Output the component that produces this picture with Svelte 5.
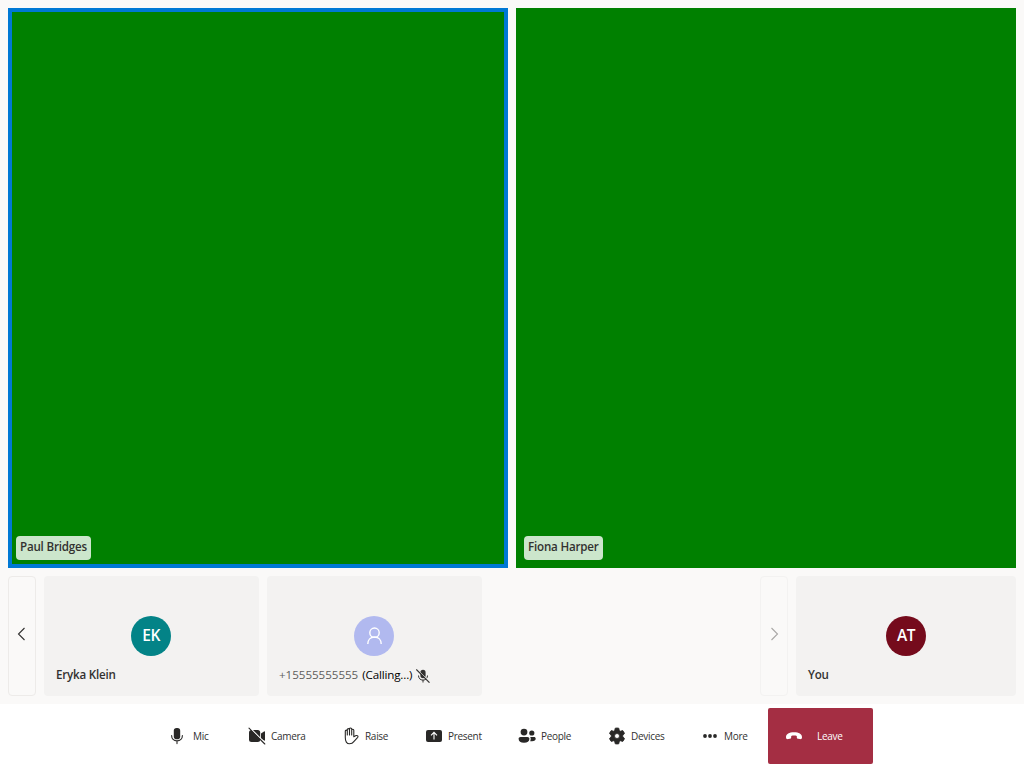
<script>
  const controls = [
    { id: 'mic', label: 'Mic', width: 80, gap: 6 },
    { id: 'camera', label: 'Camera', width: 94, gap: 4 },
    { id: 'raise', label: 'Raise', width: 83, gap: 4 },
    { id: 'present', label: 'Present', width: 93, gap: 4 },
    { id: 'people', label: 'People', width: 90, gap: 4 },
    { id: 'devices', label: 'Devices', width: 93, gap: 4 },
    { id: 'more', label: 'More', width: 84, gap: 4 },
    { id: 'leave', label: 'Leave', width: 105, gap: 13 }
  ];
</script>

<main>
  <section class="videos">
    <div class="video speaking"><span class="tag">Paul Bridges</span></div>
    <div class="video"><span class="tag">Fiona Harper</span></div>
  </section>

  <section class="strip">
    <button class="nav" aria-label="Previous">
      <svg width="12" height="14" viewBox="0 0 12 14"><path d="M9.5 1 3.5 7l6 6" /></svg>
    </button>
    <div class="tile">
      <div class="avatar teal">EK</div>
      <div class="name">Eryka Klein</div>
    </div>
    <div class="tile">
      <div class="avatar lilac">
        <svg width="20" height="20" viewBox="0 0 20 20"><circle cx="10.5" cy="6.7" r="4.7" /><path d="M3.8 18c0-4.3 2.7-7 6.7-7s6.7 2.7 6.7 7" /></svg>
      </div>
      <div class="name phone">
        <span class="number">+15555555555</span><span class="state">(Calling...)</span>
        <svg class="muted" width="14" height="14" viewBox="0 0 14 14">
          <rect x="4.4" y=".8" width="5.2" height="8.4" rx="2.6" fill="#323130" />
          <path d="M2.5 6.5c0 2.7 1.7 4.6 4.5 4.6s4.5-1.9 4.5-4.6M7 11v2.5" fill="none" stroke="#323130" />
          <path d="M1 0 14 13" stroke="#f3f2f1" stroke-width=".8" />
          <path d="M.3.5 13.5 13.7" stroke="#323130" stroke-width="1.1" />
        </svg>
      </div>
    </div>
    <div class="space"></div>
    <button class="nav disabled" aria-label="Next">
      <svg width="12" height="14" viewBox="0 0 12 14"><path d="m3.5 1 6 6-6 6" /></svg>
    </button>
    <div class="tile self">
      <div class="avatar maroon">AT</div>
      <div class="name">You</div>
    </div>
  </section>

  <nav class="bar">
    {#each controls as c}
      <button class="control {c.id}" style="width:{c.width}px;gap:{c.gap}px">
        <svg width="20" height="20" viewBox="0 0 20 20">
          {#if c.id === 'mic'}
            <rect x="6.8" y="1.9" width="6.4" height="11.3" rx="2.8" />
            <path class="line" d="M4.6 9.5c0 3.3 2.1 5.4 5.4 5.4s5.4-2.1 5.4-5.4M10 15v2.6" />
          {:else if c.id === 'camera'}
            <rect x="2" y="4" width="11.2" height="12" rx="2.5" />
            <path d="m14 7.6 3-2.2c.5-.4 1-.1 1 .5v8.2c0 .6-.5.9-1 .5l-3-2.2z" />
            <path d="M3 2 18.7 17.7" stroke="#fff" stroke-width="1.3" />
            <path class="line" d="M2 2.2 17.8 18" />
          {:else if c.id === 'raise'}
            <path class="line" d="M4.3 11.5V5.2c0-1.5 2-1.5 2 0V9 3.8c0-1.6 2.2-1.6 2.2 0V9 3.1c0-1.5 2.2-1.5 2.2 0V9 4.3c0-1.5 2.1-1.5 2.1 0v6.4l2.3-1.1c1.3-.5 2.5.6 1.6 1.7l-3.9 4.3c-.9 1.4-2 2.2-4.2 2.2-3 0-4.3-2.4-4.3-6.3z" />
          {:else if c.id === 'present'}
            <rect x="2" y="4" width="16" height="12" rx="2" />
            <path d="M10 13.5v-7M7 9.3l3-3 3 3" fill="none" stroke="#fff" stroke-width="1.1" />
          {:else if c.id === 'people'}
            <circle cx="7" cy="6.1" r="3.4" /><circle cx="14.8" cy="7" r="2.6" />
            <path d="M3.5 11h7c1.1 0 1.9.8 1.9 1.8 0 2.5-2 4-5.4 4s-5.4-1.5-5.4-4c0-1 .8-1.8 1.9-1.8z" />
            <path d="M13.2 11h3.8c1 0 1.7.7 1.7 1.6 0 2.1-1.8 3.2-5.5 2.6.6-1.5.8-3 0-4.2z" />
          {:else if c.id === 'devices'}
            <path fill-rule="evenodd" stroke="#292827" stroke-width=".8" stroke-linejoin="round" d="M8.2 2.2a8 8 0 0 1 3.6 0l.5 2.3 1.2.7 2.2-.7a8 8 0 0 1 1.8 3.1l-1.7 1.6v1.6l1.7 1.6a8 8 0 0 1-1.8 3.1l-2.2-.7-1.2.7-.5 2.3a8 8 0 0 1-3.6 0l-.5-2.3-1.2-.7-2.2.7a8 8 0 0 1-1.8-3.1l1.7-1.6V9.2L2.5 7.6a8 8 0 0 1 1.8-3.1l2.2.7 1.2-.7zM10 7.5a2.5 2.5 0 1 0 0 5 2.5 2.5 0 0 0 0-5z" />
          {:else if c.id === 'more'}
            <circle cx="5" cy="10" r="1.9" /><circle cx="10" cy="10" r="1.9" /><circle cx="15" cy="10" r="1.9" />
          {:else}
            <path d="M2 11.2C2 8 5.2 6.3 10 6.3s8 1.7 8 4.9c0 1.6-.8 2.2-2.2 1.9l-1.6-.3c-1-.2-1.4-.7-1.4-1.6V10c-1.8-.6-3.8-.6-5.6 0v1.2c0 .9-.4 1.4-1.4 1.6l-1.6.3C2.8 13.4 2 12.8 2 11.2z" />
          {/if}
        </svg>
        <span>{c.label}</span>
      </button>
    {/each}
  </nav>
</main>

<style>
  :global(body) { margin: 0; }
  main {
    width: 1024px; height: 768px; box-sizing: border-box; overflow: hidden;
    display: flex; flex-direction: column; background: #faf9f8; color: #323130;
    font-family: 'Open Sans', 'Noto Sans', sans-serif;
  }
  button { font: inherit; color: inherit; padding: 0; margin: 0; border: 0; background: none; }
  svg { display: block; flex: none; }
  .videos { display: grid; grid-template-columns: 1fr 1fr; gap: 8px; padding: 8px; height: 560px; }
  .video {
    box-sizing: border-box; background: #008000; padding: 8px;
    display: flex; align-items: flex-end;
  }
  .speaking { border: 4px solid #0078d4; padding: 4px; }
  .tag {
    box-sizing: border-box; height: 24px; line-height: 22px; padding: 0 4px; border-radius: 4px;
    background: rgba(255, 255, 255, .8); font-size: 11.6px; font-weight: 550; letter-spacing: -.2px;
  }
  .strip { display: flex; gap: 8px; height: 120px; padding: 0 8px 8px; }
  .nav {
    box-sizing: border-box; width: 28px; border: 1px solid #edebe9; border-radius: 4px;
    display: flex; align-items: center; justify-content: center; padding: 0 2px 4px 0;
  }
  .nav path { fill: none; stroke: #323130; stroke-width: 1.1; }
  .disabled { border-color: #f3f2f1; padding-right: 0; }
  .disabled path { stroke: #a9a7a5; }
  .tile {
    box-sizing: border-box; width: 215px; border-radius: 4px; background: #f3f2f1;
    padding: 40px 13px 0 12px; display: flex; flex-direction: column; align-items: center;
  }
  .self { width: 220px; padding-right: 12px; }
  .space { flex: 1; }
  .avatar {
    width: 40px; height: 40px; border-radius: 50%; color: #fff; font-size: 15.5px; font-weight: 560;
    letter-spacing: -.6px; line-height: 38px; display: flex; justify-content: center; flex: none;
  }
  .teal { background: #038387; }
  .lilac { background: #b1b9ef; align-items: center; }
  .lilac svg { fill: none; stroke: #fff; stroke-width: 1.4; }
  .maroon { background: #750b1c; }
  .name {
    align-self: stretch; height: 24px; line-height: 22px; margin-top: 8px;
    font-size: 11.6px; font-weight: 550; white-space: nowrap; letter-spacing: -.2px;
  }
  .phone { display: flex; font-weight: 400; }
  .number { color: #605e5c; letter-spacing: -.03px; }
  .state { color: #000; margin-left: 4px; letter-spacing: -.15px; }
  .muted { margin: 5px 0 0 4px; }
  .bar {
    height: 64px; box-sizing: border-box; background: #fff; padding: 4px 0 4px 151px;
    display: flex;
  }
  .control {
    box-sizing: border-box; height: 56px; padding-left: 16px; flex: none;
    display: flex; align-items: center; font-size: 10px; letter-spacing: -.3px;
    fill: #292827; white-space: nowrap;
  }
  .control .line { fill: none; stroke: #292827; stroke-width: 1.1; stroke-linecap: round; stroke-linejoin: round; }
  .leave { background: #a42e43; color: #fff; fill: #fff; border-radius: 2px; }
</style>
